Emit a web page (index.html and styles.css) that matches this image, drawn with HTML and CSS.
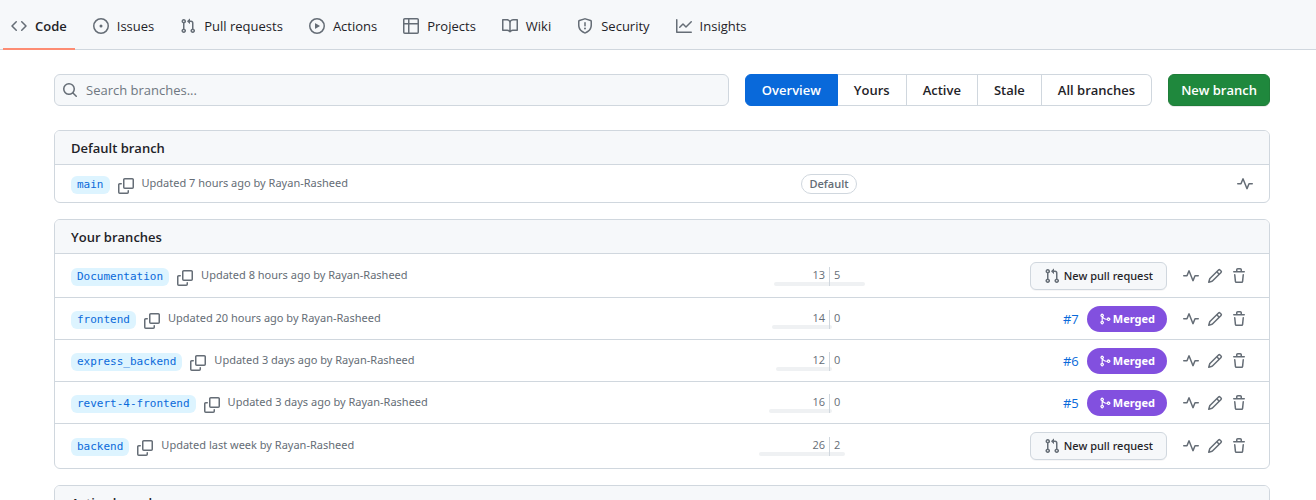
FILE: index.html
```html
<!DOCTYPE html>
<html lang="en">
<head>
<meta charset="utf-8">
<meta name="viewport" content="width=device-width, initial-scale=1">
<title>Branches</title>
<link rel="stylesheet" href="styles.css">
</head>
<body>
<svg class="sprite" aria-hidden="true">
  <symbol id="code" viewBox="0 0 16 16"><path d="M4.72 3.22a.75.75 0 0 1 1.06 1.06L2.06 8l3.72 3.72a.75.75 0 1 1-1.06 1.06L.47 8.53a.75.75 0 0 1 0-1.06l4.25-4.25zm6.56 0a.75.75 0 1 0-1.06 1.06L13.94 8l-3.72 3.72a.75.75 0 1 0 1.06 1.06l4.25-4.25a.75.75 0 0 0 0-1.06l-4.25-4.25z"/></symbol>
  <symbol id="issue" viewBox="0 0 16 16"><path d="M8 9.5a1.5 1.5 0 1 0 0-3 1.5 1.5 0 0 0 0 3Z"/><path d="M8 0a8 8 0 1 1 0 16A8 8 0 0 1 8 0ZM1.5 8a6.5 6.5 0 1 0 13 0 6.5 6.5 0 0 0-13 0Z"/></symbol>
  <symbol id="pull" viewBox="0 0 16 16"><path d="M1.5 3.25a2.25 2.25 0 1 1 3 2.122v5.256a2.251 2.251 0 1 1-1.5 0V5.372A2.25 2.25 0 0 1 1.5 3.25Zm5.677-.177L9.573.677A.25.25 0 0 1 10 .854V2.5h1A2.5 2.5 0 0 1 13.5 5v5.628a2.251 2.251 0 1 1-1.5 0V5a1 1 0 0 0-1-1h-1v1.646a.25.25 0 0 1-.427.177L7.177 3.427a.25.25 0 0 1 0-.354ZM3.75 2.5a.75.75 0 1 0 0 1.5.75.75 0 0 0 0-1.5Zm0 9.5a.75.75 0 1 0 0 1.5.75.75 0 0 0 0-1.5Zm8.25.75a.75.75 0 1 0 1.5 0 .75.75 0 0 0-1.5 0Z"/></symbol>
  <symbol id="play" viewBox="0 0 16 16"><path d="M8 0a8 8 0 1 1 0 16A8 8 0 0 1 8 0ZM1.5 8a6.5 6.5 0 1 0 13 0 6.5 6.5 0 0 0-13 0Zm4.879-2.773 4.264 2.559a.25.25 0 0 1 0 .428l-4.264 2.559A.25.25 0 0 1 6 10.559V5.442a.25.25 0 0 1 .379-.215Z"/></symbol>
  <symbol id="table" viewBox="0 0 16 16"><path d="M0 1.75C0 .784.784 0 1.75 0h12.5C15.216 0 16 .784 16 1.75v12.5A1.75 1.75 0 0 1 14.25 16H1.75A1.75 1.75 0 0 1 0 14.25ZM6.5 6.5v8h7.75a.25.25 0 0 0 .25-.25V6.5Zm8-1.5V1.75a.25.25 0 0 0-.25-.25H6.5V5Zm-13 1.5v7.75c0 .138.112.25.25.25H5v-8ZM5 5V1.5H1.75a.25.25 0 0 0-.25.25V5Z"/></symbol>
  <symbol id="book" viewBox="0 0 16 16"><path d="M0 1.75A.75.75 0 0 1 .75 1h4.253c1.227 0 2.317.59 3 1.501A3.743 3.743 0 0 1 11.006 1h4.245a.75.75 0 0 1 .75.75v10.5a.75.75 0 0 1-.75.75h-4.507a2.25 2.25 0 0 0-1.591.659l-.622.621a.75.75 0 0 1-1.06 0l-.622-.621A2.25 2.25 0 0 0 5.258 13H.75a.75.75 0 0 1-.75-.75Zm7.251 10.324.004-5.073-.002-2.253A2.25 2.25 0 0 0 5.003 2.5H1.5v9h3.757a3.75 3.75 0 0 1 1.994.574ZM8.755 4.75l-.004 7.322a3.752 3.752 0 0 1 1.992-.572H14.5v-9h-3.495a2.25 2.25 0 0 0-2.25 2.25Z"/></symbol>
  <symbol id="shield" viewBox="0 0 16 16"><path d="M7.467.133a1.748 1.748 0 0 1 1.066 0l5.25 1.68A1.75 1.75 0 0 1 15 3.48V7c0 1.566-.32 3.182-1.303 4.682-.983 1.498-2.585 2.813-5.032 3.855a1.697 1.697 0 0 1-1.33 0c-2.447-1.042-4.049-2.357-5.032-3.855C1.32 10.182 1 8.566 1 7V3.48a1.755 1.755 0 0 1 1.217-1.667Zm.61 1.429a.25.25 0 0 0-.153 0l-5.25 1.68a.25.25 0 0 0-.174.238V7c0 1.358.275 2.666 1.057 3.86.784 1.194 2.121 2.34 4.366 3.297a.196.196 0 0 0 .154 0c2.245-.956 3.582-2.104 4.366-3.298C13.225 9.666 13.5 8.36 13.5 7V3.48a.251.251 0 0 0-.174-.237l-5.25-1.68ZM8.75 4.75v3a.75.75 0 0 1-1.5 0v-3a.75.75 0 0 1 1.5 0ZM9 10.5a1 1 0 1 1-2 0 1 1 0 0 1 2 0Z"/></symbol>
  <symbol id="graph" viewBox="0 0 16 16"><path d="M1.5 1.75V13.5h13.75a.75.75 0 0 1 0 1.5H.75a.75.75 0 0 1-.75-.75V1.75a.75.75 0 0 1 1.5 0Zm14.28 2.53-5.25 5.25a.75.75 0 0 1-1.06 0L7 7.06 4.28 9.78a.751.751 0 0 1-1.06-1.06l3.25-3.25a.75.75 0 0 1 1.06 0L10 7.94l4.72-4.72a.751.751 0 0 1 1.06 1.06Z"/></symbol>
  <symbol id="search" viewBox="0 0 16 16"><path d="M10.68 11.74a6 6 0 0 1-7.922-8.982 6 6 0 0 1 8.982 7.922l3.04 3.04a.749.749 0 0 1-1.06 1.06ZM11.5 7a4.499 4.499 0 1 0-8.997 0A4.499 4.499 0 0 0 11.5 7Z"/></symbol>
  <symbol id="copy" viewBox="0 0 16 16"><path d="M5 1.75C5 .784 5.784 0 6.75 0h7.5C15.216 0 16 .784 16 1.75v7.5A1.75 1.75 0 0 1 14.25 11h-7.5A1.75 1.75 0 0 1 5 9.25Zm1.75-.25a.25.25 0 0 0-.25.25v7.5c0 .138.112.25.25.25h7.5a.25.25 0 0 0 .25-.25v-7.5a.25.25 0 0 0-.25-.25ZM0 6.75C0 5.784.784 5 1.75 5h1.5a.75.75 0 0 1 0 1.5h-1.5a.25.25 0 0 0-.25.25v7.5c0 .138.112.25.25.25h7.5a.25.25 0 0 0 .25-.25v-1.5a.75.75 0 0 1 1.5 0v1.5A1.75 1.75 0 0 1 9.25 16h-7.5A1.75 1.75 0 0 1 0 14.25Z"/></symbol>
  <symbol id="pulse" viewBox="0 0 16 16"><path d="M6 2c.306 0 .582.187.696.471L10 10.731l1.304-3.26A.751.751 0 0 1 12 7h3.25a.75.75 0 0 1 0 1.5h-2.742l-1.812 4.528a.751.751 0 0 1-1.392 0L6 4.77 4.696 8.03A.75.75 0 0 1 4 8.5H.75a.75.75 0 0 1 0-1.5h2.742l1.812-4.529A.751.751 0 0 1 6 2Z"/></symbol>
  <symbol id="pencil" viewBox="0 0 16 16"><path d="M11.013 1.427a1.75 1.75 0 0 1 2.474 0l1.086 1.086a1.75 1.75 0 0 1 0 2.474l-8.61 8.61c-.21.21-.47.364-.756.445l-3.251.93a.75.75 0 0 1-.927-.928l.929-3.25c.081-.286.235-.547.445-.758l8.61-8.61Zm.176 4.823L9.75 4.81l-6.286 6.287a.253.253 0 0 0-.064.108l-.558 1.953 1.953-.558a.253.253 0 0 0 .108-.064Zm1.238-3.763a.25.25 0 0 0-.354 0L10.811 3.75l1.439 1.44 1.263-1.263a.25.25 0 0 0 0-.354Z"/></symbol>
  <symbol id="trash" viewBox="0 0 16 16"><path d="M11 1.75V3h2.25a.75.75 0 0 1 0 1.5H2.75a.75.75 0 0 1 0-1.5H5V1.75C5 .784 5.784 0 6.75 0h2.5C10.216 0 11 .784 11 1.75ZM4.496 6.675l.66 6.6a.25.25 0 0 0 .249.225h5.19a.25.25 0 0 0 .249-.225l.66-6.6a.75.75 0 0 1 1.492.149l-.66 6.6A1.748 1.748 0 0 1 10.595 15h-5.19a1.75 1.75 0 0 1-1.741-1.575l-.66-6.6a.75.75 0 1 1 1.492-.15ZM6.5 1.75V3h3V1.75a.25.25 0 0 0-.25-.25h-2.5a.25.25 0 0 0-.25.25Z"/></symbol>
  <symbol id="merge" viewBox="0 0 16 16"><path d="M5.45 5.154A4.25 4.25 0 0 0 9.25 7.5h1.378a2.251 2.251 0 1 1 0 1.5H9.25A5.734 5.734 0 0 1 5 7.123v3.505a2.25 2.25 0 1 1-1.5 0V5.372a2.25 2.25 0 1 1 1.95-.218ZM4.25 13.5a.75.75 0 1 0 0-1.5.75.75 0 0 0 0 1.5Zm8.5-4.5a.75.75 0 1 0 0-1.5.75.75 0 0 0 0 1.5ZM5 3.25a.75.75 0 1 0-1.5 0 .75.75 0 0 0 1.5 0Z"/></symbol>
</svg>

<nav class="tabs" aria-label="Repository">
  <a class="tab tab-current" href="#code-tab" aria-current="page"><svg class="icon"><use href="#code"/></svg>Code</a>
  <a class="tab" href="#issues"><svg class="icon"><use href="#issue"/></svg>Issues</a>
  <a class="tab" href="#pulls"><svg class="icon"><use href="#pull"/></svg>Pull requests</a>
  <a class="tab" href="#actions"><svg class="icon"><use href="#play"/></svg>Actions</a>
  <a class="tab" href="#projects"><svg class="icon"><use href="#table"/></svg>Projects</a>
  <a class="tab" href="#wiki"><svg class="icon"><use href="#book"/></svg>Wiki</a>
  <a class="tab" href="#security"><svg class="icon"><use href="#shield"/></svg>Security</a>
  <a class="tab" href="#insights"><svg class="icon"><use href="#graph"/></svg>Insights</a>
</nav>

<main class="content">
  <div class="toolbar">
    <label class="search">
      <svg class="icon"><use href="#search"/></svg>
      <input class="search-input" type="text" placeholder="Search branches..." aria-label="Search branches">
    </label>
    <nav class="views" aria-label="Branch views">
      <a class="view view-current" href="#overview" aria-current="page">Overview</a>
      <a class="view" href="#yours">Yours</a>
      <a class="view" href="#active">Active</a>
      <a class="view" href="#stale">Stale</a>
      <a class="view" href="#all">All branches</a>
    </nav>
    <button class="new-branch" type="button">New branch</button>
  </div>

  <section class="box">
    <h2 class="box-title">Default branch</h2>
    <ul class="rows">
      <li class="row row-default">
        <div class="branch"><a class="name" href="#main">main</a><button class="tool" type="button" aria-label="Copy"><svg class="icon"><use href="#copy"/></svg></button><span class="updated">Updated 7 hours ago by Rayan-Rasheed</span></div>
        <div class="middle"><span class="badge">Default</span></div>
        <div class="side"><button class="tool" type="button" aria-label="Activity"><svg class="icon"><use href="#pulse"/></svg></button></div>
      </li>
    </ul>
  </section>

  <section class="box">
    <h2 class="box-title">Your branches</h2>
    <ul class="rows">
      <li class="row">
        <div class="branch"><a class="name" href="#documentation">Documentation</a><button class="tool" type="button" aria-label="Copy"><svg class="icon"><use href="#copy"/></svg></button><span class="updated">Updated 8 hours ago by Rayan-Rasheed</span></div>
        <div class="diverge"><div class="behind"><span>13</span><i class="bar" style="width:55px"></i></div><div class="ahead"><span>5</span><i class="bar" style="width:35px"></i></div></div>
        <div class="side"><button class="new-pull" type="button"><svg class="icon"><use href="#pull"/></svg>New pull request</button>
          <div class="tools"><button class="tool" type="button" aria-label="Activity"><svg class="icon"><use href="#pulse"/></svg></button><button class="tool" type="button" aria-label="Rename"><svg class="icon"><use href="#pencil"/></svg></button><button class="tool" type="button" aria-label="Delete"><svg class="icon"><use href="#trash"/></svg></button></div></div>
      </li>
      <li class="row">
        <div class="branch"><a class="name" href="#frontend">frontend</a><button class="tool" type="button" aria-label="Copy"><svg class="icon"><use href="#copy"/></svg></button><span class="updated">Updated 20 hours ago by Rayan-Rasheed</span></div>
        <div class="diverge"><div class="behind"><span>14</span><i class="bar" style="width:57px"></i></div><div class="ahead"><span>0</span><i class="bar" style="width:2px"></i></div></div>
        <div class="side"><a class="number" href="#pull-7">#7</a><span class="merged"><svg class="icon-small"><use href="#merge"/></svg>Merged</span>
          <div class="tools"><button class="tool" type="button" aria-label="Activity"><svg class="icon"><use href="#pulse"/></svg></button><button class="tool" type="button" aria-label="Rename"><svg class="icon"><use href="#pencil"/></svg></button><button class="tool" type="button" aria-label="Delete"><svg class="icon"><use href="#trash"/></svg></button></div></div>
      </li>
      <li class="row">
        <div class="branch"><a class="name" href="#express_backend">express_backend</a><button class="tool" type="button" aria-label="Copy"><svg class="icon"><use href="#copy"/></svg></button><span class="updated">Updated 3 days ago by Rayan-Rasheed</span></div>
        <div class="diverge"><div class="behind"><span>12</span><i class="bar" style="width:53px"></i></div><div class="ahead"><span>0</span><i class="bar" style="width:2px"></i></div></div>
        <div class="side"><a class="number" href="#pull-6">#6</a><span class="merged"><svg class="icon-small"><use href="#merge"/></svg>Merged</span>
          <div class="tools"><button class="tool" type="button" aria-label="Activity"><svg class="icon"><use href="#pulse"/></svg></button><button class="tool" type="button" aria-label="Rename"><svg class="icon"><use href="#pencil"/></svg></button><button class="tool" type="button" aria-label="Delete"><svg class="icon"><use href="#trash"/></svg></button></div></div>
      </li>
      <li class="row">
        <div class="branch"><a class="name" href="#revert-4-frontend">revert-4-frontend</a><button class="tool" type="button" aria-label="Copy"><svg class="icon"><use href="#copy"/></svg></button><span class="updated">Updated 3 days ago by Rayan-Rasheed</span></div>
        <div class="diverge"><div class="behind"><span>16</span><i class="bar" style="width:60px"></i></div><div class="ahead"><span>0</span><i class="bar" style="width:2px"></i></div></div>
        <div class="side"><a class="number" href="#pull-5">#5</a><span class="merged"><svg class="icon-small"><use href="#merge"/></svg>Merged</span>
          <div class="tools"><button class="tool" type="button" aria-label="Activity"><svg class="icon"><use href="#pulse"/></svg></button><button class="tool" type="button" aria-label="Rename"><svg class="icon"><use href="#pencil"/></svg></button><button class="tool" type="button" aria-label="Delete"><svg class="icon"><use href="#trash"/></svg></button></div></div>
      </li>
      <li class="row">
        <div class="branch"><a class="name" href="#backend">backend</a><button class="tool" type="button" aria-label="Copy"><svg class="icon"><use href="#copy"/></svg></button><span class="updated">Updated last week by Rayan-Rasheed</span></div>
        <div class="diverge"><div class="behind"><span>26</span><i class="bar" style="width:70px"></i></div><div class="ahead"><span>2</span><i class="bar" style="width:15px"></i></div></div>
        <div class="side"><button class="new-pull" type="button"><svg class="icon"><use href="#pull"/></svg>New pull request</button>
          <div class="tools"><button class="tool" type="button" aria-label="Activity"><svg class="icon"><use href="#pulse"/></svg></button><button class="tool" type="button" aria-label="Rename"><svg class="icon"><use href="#pencil"/></svg></button><button class="tool" type="button" aria-label="Delete"><svg class="icon"><use href="#trash"/></svg></button></div></div>
      </li>
    </ul>
  </section>

  <section class="box">
    <h2 class="box-title">Active branches</h2>
  </section>
</main>
</body>
</html>
```
FILE: styles.css
```css
* { box-sizing: border-box; }
body {
  margin: 0;
  background: #fff;
  color: #1f2328;
  font: 13px/20px "Open Sans", "Noto Sans", sans-serif;
}
html { scrollbar-width: none; }
a { color: inherit; text-decoration: none; }
button, input { font: inherit; color: inherit; }
.sprite { display: none; }
.icon { display: block; flex: none; width: 16px; height: 16px; fill: #656d76; }
.icon-small { display: block; flex: none; width: 12px; height: 12px; fill: #fff; }

.tabs {
  display: flex;
  gap: 10px;
  height: 50px;
  padding-left: 3px;
  background: #f6f8fa;
  border-bottom: 1px solid #d0d7de;
}
.tab {
  display: flex;
  align-items: center;
  gap: 8px;
  height: 50px;
  padding: 4px 8px 0;
  border-bottom: 2px solid transparent;
  white-space: nowrap;
}
.tab-current { border-color: #fd8c73; font-weight: 600; }

.content { padding: 24px 46px 0 54px; }
.toolbar { display: flex; gap: 16px; margin-bottom: 24px; }
.search {
  flex: 1;
  display: flex;
  align-items: center;
  gap: 8px;
  height: 32px;
  padding: 0 7px;
  background: #f6f8fa;
  border: 1px solid #d0d7de;
  border-radius: 6px;
}
.search-input { flex: 1; min-width: 0; padding: 0; border: 0; outline: 0; background: none; }
.search-input::placeholder { color: #6e7781; opacity: 1; }
.views { display: flex; font-weight: 600; }
.view {
  padding: 5px 16px;
  border: 1px solid #d0d7de;
  border-left-width: 0;
  white-space: nowrap;
}
.view:last-child { border-radius: 0 6px 6px 0; }
.view-current {
  background: #0969da;
  border-color: #0969da;
  border-left-width: 1px;
  border-radius: 6px 0 0 6px;
  color: #fff;
}
.new-branch {
  padding: 0 12px;
  background: #1f883d;
  border: 1px solid #1f7d39;
  border-radius: 6px;
  box-shadow: 0 1px 0 #1f23281a;
  color: #fff;
  font-weight: 600;
}

.box { margin-bottom: 16px; border: 1px solid #d0d7de; border-radius: 6px; overflow: hidden; }
.box-title {
  margin: 0;
  padding: 7px 16px 6px;
  background: #f6f8fa;
  font-size: 13px;
  line-height: 20px;
  font-weight: 600;
}
.rows { margin: 0; padding: 0; list-style: none; }
.row {
  display: grid;
  grid-template-columns: 2fr 180px 1fr;
  align-items: center;
  padding: 8px 16px 7px;
  border-top: 1px solid #d0d7de;
}
.row:last-child { padding-bottom: 8px; }
.row-default { padding-top: 9px; }
.branch { display: flex; align-items: flex-end; gap: 8px; }
.name {
  padding: 0 6px;
  background: #ddf4ff;
  border-radius: 6px;
  color: #0969da;
  font: 11px/18px "DejaVu Sans Mono", "Liberation Mono", monospace;
}
.tool { display: block; padding: 0; border: 0; background: none; }
.updated { padding-bottom: 2px; color: #656d76; font-family: "Noto Sans", sans-serif; font-size: 11px; line-height: 18px; }
.middle { display: flex; justify-content: center; }
.badge {
  padding: 0 7px;
  border: 1px solid #d0d7de;
  border-radius: 10px;
  color: #656d76;
  font-size: 11px;
  line-height: 18px;
  font-weight: 600;
}
.diverge {
  display: grid;
  grid-template-columns: 1fr 1fr;
  color: #656d76;
  font-size: 11px;
  line-height: 15px;
}
.behind, .ahead { display: flex; flex-direction: column; }
.behind { align-items: flex-end; }
.ahead { border-left: 1px solid #d0d7de; }
.behind span, .ahead span { padding: 0 4px; }
.bar { height: 4px; background: #eff1f3; }
.behind .bar { border-radius: 2px 0 0 2px; }
.ahead .bar { border-radius: 0 2px 2px 0; }
.side { display: flex; align-items: center; justify-content: flex-end; gap: 8px; }
.tools { display: flex; gap: 8px; padding: 0 6px 0 8px; }
.new-pull {
  display: flex;
  align-items: center;
  gap: 4px;
  height: 28px;
  padding: 0 13px;
  background: #f6f8fa;
  border: 1px solid #d0d7de;
  border-radius: 6px;
  box-shadow: 0 1px 0 #1f23280a;
  font-family: "Noto Sans", sans-serif;
  font-size: 11px;
  font-weight: 500;
  white-space: nowrap;
}
.number { color: #0969da; }
.merged {
  display: flex;
  align-items: center;
  gap: 2px;
  height: 26px;
  padding: 0 12px;
  background: #8250df;
  border-radius: 13px;
  color: #fff;
  font-family: "Noto Sans", sans-serif;
  font-size: 11px;
  font-weight: 700;
}
```
